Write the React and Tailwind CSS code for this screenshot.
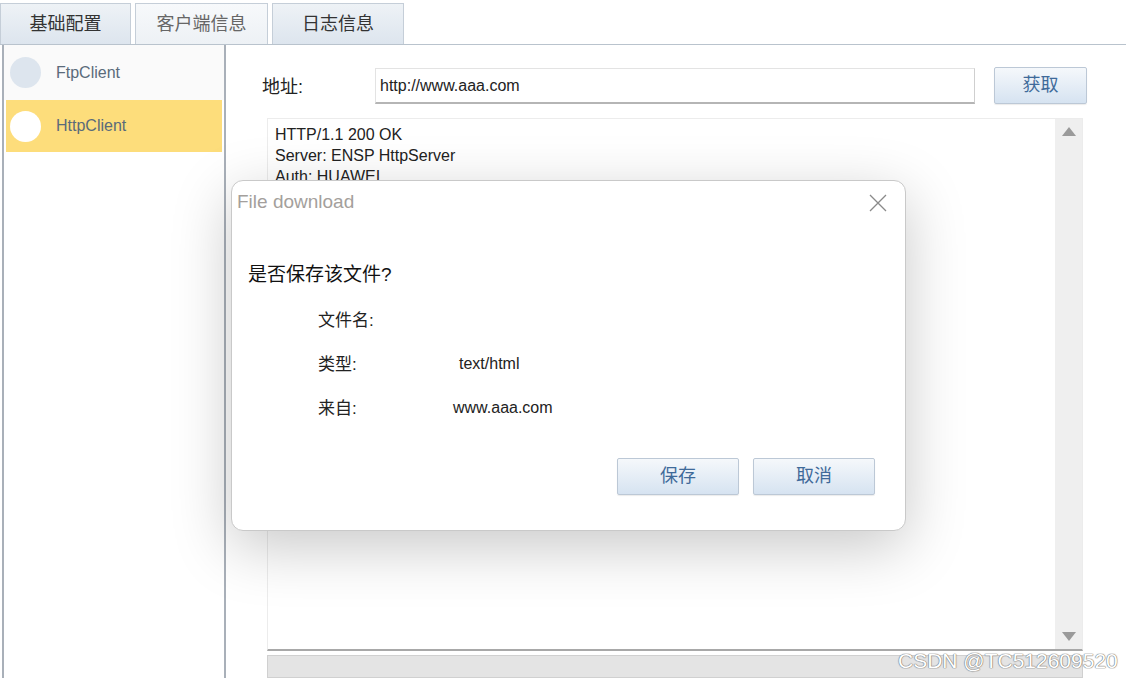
import React from "react";

const F = { fontFamily: '"Liberation Sans", "Noto Sans CJK SC", sans-serif' };

function Tab({ label, w, active }) {
  return (
    <div
      className={`h-[41px] mt-[3px] flex items-center justify-center border border-[#c5ced8] border-b-0 bg-gradient-to-b ${
        active ? "from-[#f7f9fb] to-[#edf1f5] text-[#666]" : "from-[#eef2f6] to-[#dde5ee] text-[#333]"
      } text-[18px]`}
      style={{ width: w }}
    >
      {label}
    </div>
  );
}

function Btn({ children, className = "" }) {
  return (
    <div
      className={`flex items-center justify-center border border-[#bcc8d6] rounded-[2px] bg-gradient-to-b from-[#f5f8fb] to-[#d6e3f1] text-[#3f6a9a] text-[18px] shadow-[0_1px_1px_rgba(0,0,0,0.08)] ${className}`}
    >
      {children}
    </div>
  );
}

export default function App() {
  return (
    <div className="relative w-[1126px] h-[678px] overflow-hidden bg-white" style={F}>
      {/* tabs */}
      <div className="flex gap-[4px] h-[45px] border-b border-[#b9c3cd]">
        <Tab label="基础配置" w={131} />
        <Tab label="客户端信息" w={133} active />
        <Tab label="日志信息" w={132} />
      </div>

      <div className="flex h-[633px]">
        {/* left panel */}
        <div className="ml-[2px] w-[224px] shrink-0 border-l-2 border-r-2 border-[#a9b0b9] flex flex-col">
          <div className="h-[55px] bg-[#fafafa] flex items-center pl-[6px] gap-[15px]">
            <div className="w-[31px] h-[31px] rounded-full bg-[#dde5ee]" />
            <span className="text-[16px] text-[#5a6b7a]">FtpClient</span>
          </div>
          <div className="h-[52px] mx-[2px] bg-[#fddd7b] flex items-center pl-[4px] gap-[15px]">
            <div className="w-[31px] h-[31px] rounded-full bg-white" />
            <span className="text-[16px] text-[#5a6b7a]">HttpClient</span>
          </div>
          <div className="flex-1 bg-white" />
        </div>

        {/* main */}
        <div className="flex-1 min-w-0 flex flex-col pl-[41px]">
          <div className="flex items-center mt-[22px] h-[37px] -ml-[5px]">
            <span className="w-[113px] shrink-0 text-[18px] text-[#222] pt-[4px]">地址:</span>
            <div className="w-[600px] shrink-0 h-[36px] border border-[#e3e3e3] border-b-2 border-b-[#b5b5b5] border-r-[#cfcfcf] bg-white text-[16px] text-[#222] pl-[4px] pt-[5px]">
              http://www.aaa.com
            </div>
            <Btn className="ml-[19px] w-[93px] shrink-0 h-[37px]">获取</Btn>
          </div>

          <div className="mt-[14px] h-[533px] w-[816px] flex border border-[#ececec] border-b-2 border-b-[#a8a8a8] bg-white">
            <div className="flex-1 pl-[7px] pt-[5px] text-[16px] leading-[21px] text-[#222]">
              <div>HTTP/1.1 200 OK</div>
              <div>Server: ENSP HttpServer</div>
              <div>Auth: HUAWEI</div>
            </div>
            <div className="w-[27px] bg-[#efefef] flex flex-col items-center justify-between py-[8px]">
              <div className="w-0 h-0 border-l-[7px] border-r-[7px] border-b-[9px] border-l-transparent border-r-transparent border-b-[#9a9a9a]" />
              <div className="w-0 h-0 border-l-[7px] border-r-[7px] border-t-[9px] border-l-transparent border-r-transparent border-t-[#9a9a9a]" />
            </div>
          </div>

          <div className="mt-[4px] w-[816px] flex-1 bg-[#e4e4e4] border border-[#d0d0d0]" />
        </div>
      </div>

      {/* dialog overlay */}
      <div className="absolute left-[231px] top-[180px] w-[675px] h-[351px] rounded-[12px] bg-white border border-[#c9c9c9] shadow-[0_16px_60px_rgba(0,0,0,0.22)] flex flex-col">
        <div className="flex items-center justify-between h-[42px] pl-[5px] pr-[18px]">
          <span className="text-[19px] text-[#a49f9c]">File download</span>
          <svg width="18" height="18" viewBox="0 0 18 18" className="mt-[2px]">
            <path d="M1 1 L17 17 M17 1 L1 17" stroke="#8a8a8a" strokeWidth="1.3" fill="none" />
          </svg>
        </div>
        <div className="pl-[16px] mt-[38px] text-[19px] text-[#111]">是否保存该文件?</div>
        <div className="pl-[86px] mt-[18px] flex flex-col gap-[20px] text-[17px] text-[#222]">
          <div className="h-[24px]">文件名:</div>
          <div className="h-[24px] flex">
            <span className="w-[141px]">类型:</span>
            <span className="text-[16px]">text/html</span>
          </div>
          <div className="h-[24px] flex">
            <span className="w-[135px]">来自:</span>
            <span className="text-[16px]">www.aaa.com</span>
          </div>
        </div>
        <div className="flex justify-end gap-[14px] pr-[30px] mt-[38px]">
          <Btn className="w-[122px] h-[37px]">保存</Btn>
          <Btn className="w-[122px] h-[37px]">取消</Btn>
        </div>
      </div>

      {/* watermark */}
      <div
        className="absolute left-[898px] top-[645px] text-[21px] text-white"
        style={{ textShadow: "0 0 1px #777, 0 0 1px #777, 0 0 1px #777" }}
      >
        CSDN @TC512609520
      </div>
    </div>
  );
}
